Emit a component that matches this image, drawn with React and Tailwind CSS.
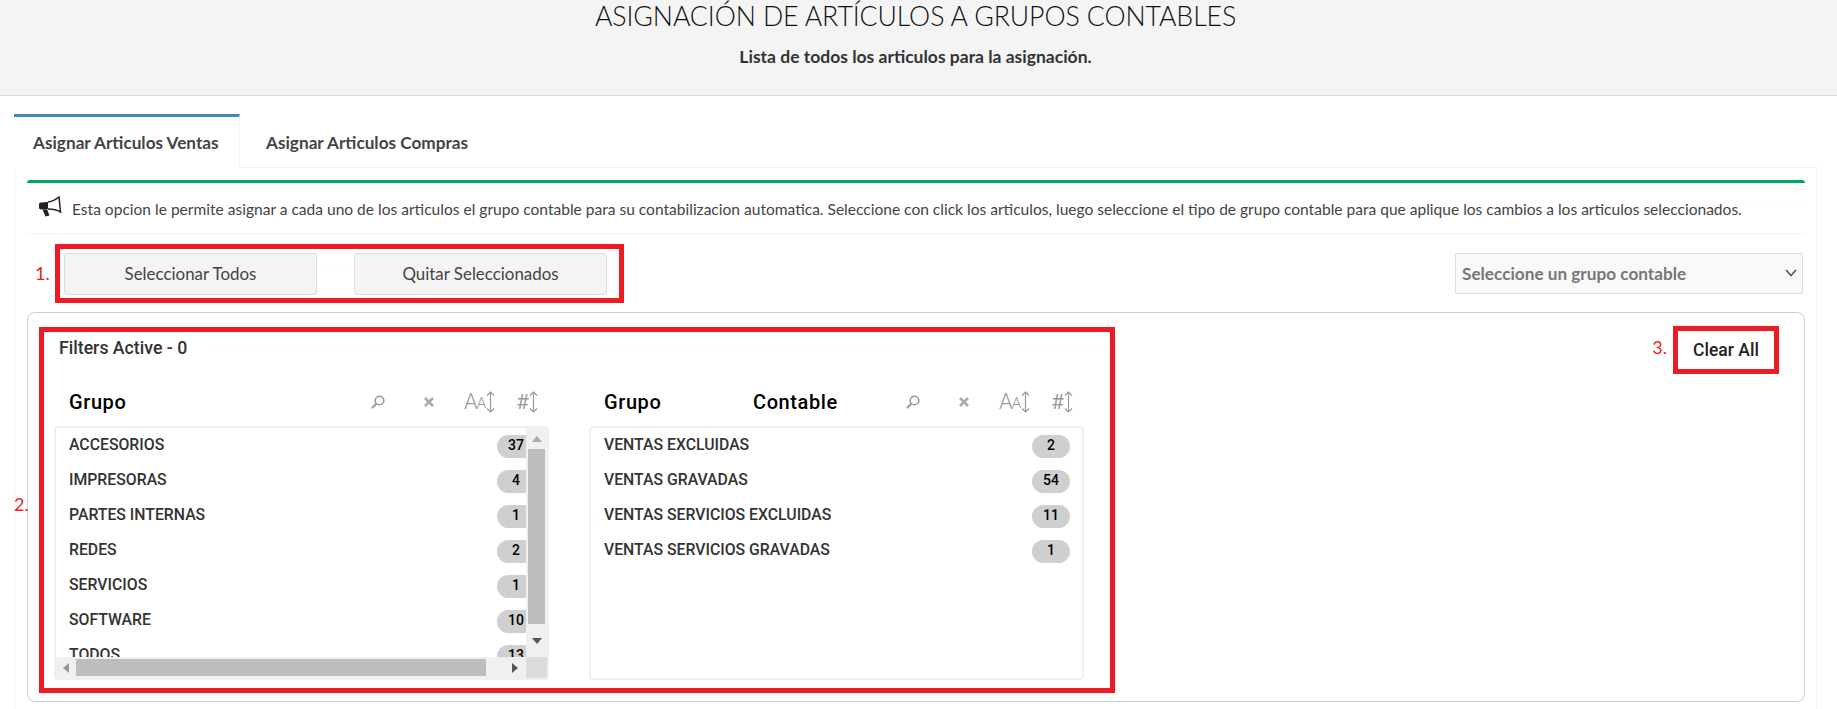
const Search = () => (
  <svg width="16" height="16" viewBox="0 0 16 16" fill="none" stroke="#999" strokeWidth="1.6"><circle cx="9.5" cy="6.5" r="4.3" /><path d="M6.3 9.7 L2 14" strokeWidth="2" /></svg>
);
const Cross = () => (
  <svg width="12" height="12" viewBox="0 0 12 12" fill="none" stroke="#aaa" strokeWidth="2.6"><path d="M2 2 L10 10 M10 2 L2 10" /></svg>
);
const UpDown = () => (
  <svg width="9" height="22" viewBox="0 0 9 22" fill="none" stroke="#999" strokeWidth="1.2"><path d="M4.5 1 V21 M1 4.5 L4.5 1 L8 4.5 M1 17.5 L4.5 21 L8 17.5" /></svg>
);
const Tri = ({ d, c = "#555" }) => {
  const p = { up: "M0 6 L5 0 L10 6Z", down: "M0 0 L10 0 L5 6Z", left: "M6 0 L6 10 L0 5Z", right: "M0 0 L6 5 L0 10Z" }[d];
  const box = d === "up" || d === "down" ? "0 0 10 6" : "0 0 6 10";
  return <svg width={d === "up" || d === "down" ? 10 : 6} height={d === "up" || d === "down" ? 6 : 10} viewBox={box}><path d={p} fill={c} /></svg>;
};
const Horn = () => (
  <svg width="23" height="21" viewBox="0 0 23 21" className="shrink-0 -mt-[3px]">
    <path d="M2 6.5 L9 6 L9 13 L2 13.5 C0.8 13.5 0 12.6 0 11.5 L0 8.5 C0 7.4 0.8 6.6 2 6.5Z" fill="#222" />
    <path d="M9 6 C13 5.5 17 3.5 20 1 L21.5 16 C18 13.8 13 13 9 13" fill="#fff" stroke="#222" strokeWidth="1.5" />
    <path d="M3.5 13.5 L8 13.2 L10.5 19.5 L6.5 20.5 Z" fill="#222" />
  </svg>
);

const HeadIcons = () => (
  <div className="flex items-center h-[30px]">
    <div className="w-[51px] flex justify-center"><Search /></div>
    <div className="w-[51px] flex justify-center"><Cross /></div>
    <div className="w-[51px] flex justify-center items-center text-[#999] font-['Roboto',sans-serif] font-light">
      <span className="text-[22px] leading-none">A</span><span className="text-[15px] leading-none mt-[3px] -ml-[1px]">A</span><UpDown />
    </div>
    <div className="w-[44px] flex justify-center items-center text-[#999] font-['Roboto',sans-serif]">
      <span className="text-[21px] leading-none">#</span><UpDown />
    </div>
  </div>
);

const Item = ({ name, count, clip }) => (
  <div className="h-[35px] shrink-0 flex items-start justify-between pl-[13px] pr-[12px] pt-[7px]">
    <span className="text-[15.8px] leading-[20px] font-medium text-[#333]">{name}</span>
    <span className={`h-[23px] w-[38px] shrink-0 rounded-[12px] bg-[#cfcfcf] text-black text-[14px] font-medium leading-[20px] text-center ${clip ? "-mr-[21px]" : ""}`}>{count}</span>
  </div>
);

const Facet = ({ title, items, scroll }) => (
  <div className="w-[495px]">
    <div className="flex items-center h-[30px] mt-[2px]">
      <div className="w-[298px] pl-[15px] flex text-[20px] tracking-[0.6px] font-medium text-black">
        <span className="w-[149px]">Grupo</span>{title && <span>{title}</span>}
      </div>
      <HeadIcons />
    </div>
    <div className={`mt-[9px] h-[254px] rounded-[4px] border-2 border-[#f0f0f0] flex flex-col overflow-hidden ${scroll ? "bg-[#f0f0f0]" : ""}`}>
      <div className="flex-1 min-h-0 flex">
        <div className="flex-1 min-w-0 bg-white flex flex-col overflow-hidden">
          {items.map((i) => <Item key={i[0]} name={i[0]} count={i[1]} clip={scroll} />)}
        </div>
        {scroll && (
          <div className="w-[21px] flex flex-col items-center">
            <div className="h-[21px] flex items-center"><Tri d="up" c="#aaa" /></div>
            <div className="w-[17px] h-[175px] bg-[#bdbdbd]" />
            <div className="flex-1 flex items-center justify-center"><Tri d="down" /></div>
          </div>
        )}
      </div>
      {scroll && (
        <div className="h-[21px] flex shrink-0">
          <div className="w-[470px] flex items-center pl-[7px]">
            <Tri d="left" c="#999" />
            <div className="ml-[7px] w-[410px] h-[17px] bg-[#bdbdbd]" />
            <div className="ml-[26px]"><Tri d="right" /></div>
          </div>
          <div className="w-[21px] bg-[#dcdcdc]" />
        </div>
      )}
    </div>
  </div>
);

const grupos = [["ACCESORIOS", 37], ["IMPRESORAS", 4], ["PARTES INTERNAS", 1], ["REDES", 2], ["SERVICIOS", 1], ["SOFTWARE", 10], ["TODOS", 13]];
const contables = [["VENTAS EXCLUIDAS", 2], ["VENTAS GRAVADAS", 54], ["VENTAS SERVICIOS EXCLUIDAS", 11], ["VENTAS SERVICIOS GRAVADAS", 1]];

export default function App() {
  return (
    <div className="h-[709px] overflow-hidden bg-white font-['Lato',sans-serif] text-[#333]">
      <header className="h-[96px] bg-[#f4f4f4] border-b border-[#dddddd] text-center pr-[6px]">
        <h1 className="text-[26.7px] leading-[32px] font-light text-[#111] -tracking-[0.1px]">ASIGNACIÓN DE ARTÍCULOS A GRUPOS CONTABLES</h1>
        <p className="mt-[16px] text-[17.5px] leading-[18px] font-bold text-[#333]">Lista de todos los articulos para la asignación.</p>
      </header>

      <div className="ml-[14px] mt-[18px] w-[1803px]">
        <nav className="flex h-[54px] border-b border-[#f4f4f4]">
          <div className="w-[226px] h-[54px] bg-white border-t-[3px] border-[#3c8dbc] border-r border-r-[#f4f4f4] pl-[19px] pt-[16px] text-[17.2px] leading-[20px] font-bold text-[#444]">Asignar Articulos Ventas</div>
          <div className="pl-[26px] pt-[19px] text-[17.2px] leading-[20px] font-bold text-[#444]">Asignar Articulos Compras</div>
        </nav>

        <div className="border-l border-r border-[#f4f4f4] pl-[12px] pr-[11px] pt-[12px] h-[541px]">
          <div className="h-[54px] border-t-[3px] border-[#00a65a] rounded-t-[3px] border-b border-b-[#f4f4f4] flex items-center pl-[12px]">
            <Horn />
            <p className="ml-[10px] mt-[2px] text-[15.55px] leading-[20px] text-[#444] whitespace-nowrap">Esta opcion le permite asignar a cada uno de los articulos el grupo contable para su contabilizacion automatica. Seleccione con click los articulos, luego seleccione el tipo de grupo contable para que aplique los cambios a los articulos seleccionados.</p>
          </div>

          <div className="h-[79px] flex items-start pt-[10px]">
            <span className="w-[28px] pl-[8px] pt-[18px] text-[18px] leading-[22px] text-[#ed1c24]">1.</span>
            <div className="w-[569px] h-[59px] border-[5px] border-[#ed1c24] flex items-center pl-[4px] gap-[37px]">
              <button className="w-[253px] h-[42px] bg-[#f4f4f4] border border-[#dddddd] rounded-[3px] text-[16.9px] text-[#444]">Seleccionar Todos</button>
              <button className="w-[253px] h-[42px] bg-[#f4f4f4] border border-[#dddddd] rounded-[3px] text-[16.9px] text-[#444]">Quitar Seleccionados</button>
            </div>
            <div className="relative ml-auto mr-[2px] mt-[9px] w-[348px] h-[41px]">
              <select defaultValue="a" className="appearance-none w-full h-full bg-[#f9f9f9] border border-[#dddddd] rounded-[2px] pl-[6px] text-[17.2px] font-bold text-[#777]">
                <option value="a">Seleccione un grupo contable</option>
              </select>
              <svg className="absolute right-[6px] top-[16px] pointer-events-none" width="12" height="8" viewBox="0 0 12 8" fill="none" stroke="#555" strokeWidth="1.6"><path d="M1 1 L6 6.5 L11 1" /></svg>
            </div>
          </div>

          <section className="relative h-[390px] -mt-[1px] border border-[#cccccc] rounded-[8px] flex items-start pl-[11px]">
            <span className="absolute -left-[14px] top-[180px] text-[18px] leading-[22px] text-[#ed1c24]">2.</span>
            <div className="mt-[14px] w-[1076px] h-[366px] border-[5px] border-[#ed1c24] pl-[10px] pt-[5px] font-['Roboto',sans-serif]">
              <div className="pl-[5px] text-[17.7px] leading-[22px] font-medium text-[#333]">Filters Active - 0</div>
              <div className="mt-[26px] flex gap-[40px]">
                <Facet items={grupos} scroll />
                <Facet title="Contable" items={contables} />
              </div>
            </div>
            <span className="ml-auto mt-[23px] text-[18px] leading-[22px] text-[#ed1c24]">3.</span>
            <div className="ml-[6px] mr-[25px] mt-[13px] w-[106px] h-[48px] border-[5px] border-[#ed1c24] flex items-center justify-center pt-[1px] font-['Roboto',sans-serif] text-[17.5px] font-medium text-[#222]">Clear All</div>
          </section>
        </div>
      </div>
    </div>
  );
}
